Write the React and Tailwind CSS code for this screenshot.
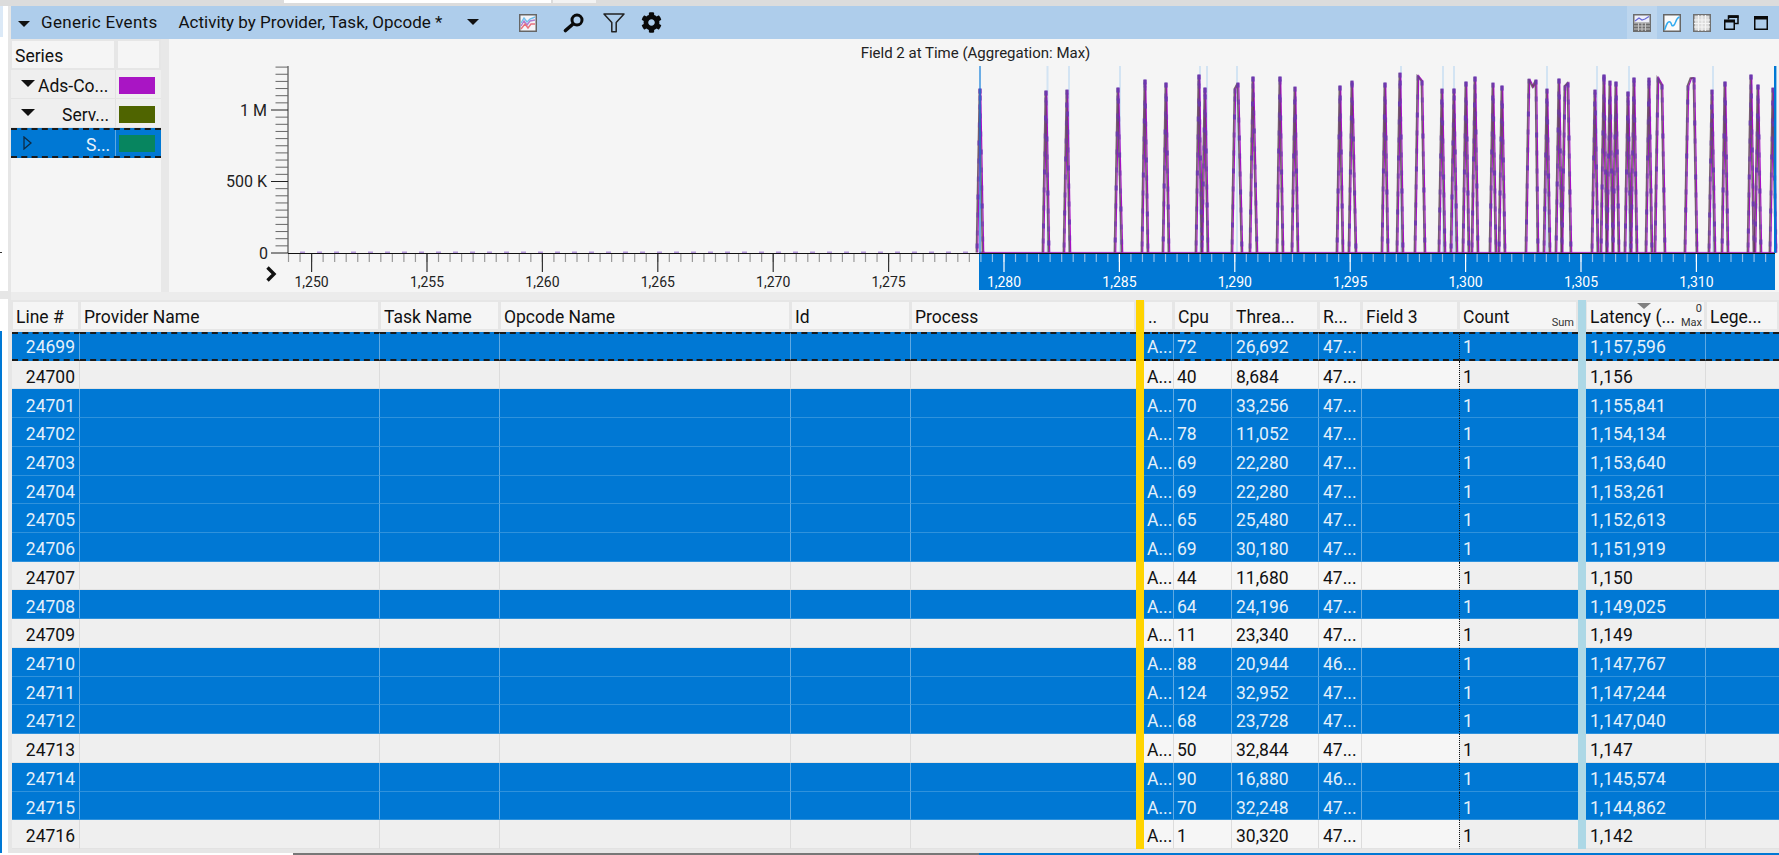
import React from "react";
import { FaCog } from "react-icons/fa";

const font = "font-['Roboto','Liberation_Sans',sans-serif]";
const cols = "grid-cols-[68px_300px_120px_291px_120px_225px_8px_30px_58px_87px_43px_97px_119px_8px_120px_73px]";

const rows = [
  ["24699", true, "72", "26,692", "47...", "1,157,596"],
  ["24700", false, "40", "8,684", "47...", "1,156"],
  ["24701", true, "70", "33,256", "47...", "1,155,841"],
  ["24702", true, "78", "11,052", "47...", "1,154,134"],
  ["24703", true, "69", "22,280", "47...", "1,153,640"],
  ["24704", true, "69", "22,280", "47...", "1,153,261"],
  ["24705", true, "65", "25,480", "47...", "1,152,613"],
  ["24706", true, "69", "30,180", "47...", "1,151,919"],
  ["24707", false, "44", "11,680", "47...", "1,150"],
  ["24708", true, "64", "24,196", "47...", "1,149,025"],
  ["24709", false, "11", "23,340", "47...", "1,149"],
  ["24710", true, "88", "20,944", "46...", "1,147,767"],
  ["24711", true, "124", "32,952", "47...", "1,147,244"],
  ["24712", true, "68", "23,728", "47...", "1,147,040"],
  ["24713", false, "50", "32,844", "47...", "1,147"],
  ["24714", true, "90", "16,880", "46...", "1,145,574"],
  ["24715", true, "70", "32,248", "47...", "1,144,862"],
  ["24716", false, "1", "30,320", "47...", "1,142"],
];

// Peaks: [x, y] vertices between base points, in page coordinates
const peaks = [
  [977, [[980, 89]], 983], [1043, [[1046, 91]], 1049], [1064, [[1067, 90]], 1070],
  [1115, [[1118, 88]], 1122], [1142, [[1145, 80]], 1148], [1163, [[1166, 83]], 1169],
  [1196, [[1199, 75]], 1202], [1202, [[1205, 88]], 1208],
  [1232, [[1235, 89], [1238, 83]], 1242], [1250, [[1253, 77]], 1257], [1277, [[1280, 77]], 1283],
  [1292, [[1295, 87]], 1298], [1337, [[1340, 86]], 1343], [1349, [[1352, 81]], 1356],
  [1382, [[1385, 83]], 1388], [1397, [[1400, 73]], 1403],
  [1415, [[1418, 76], [1422, 81]], 1425], [1439, [[1442, 89]], 1445], [1451, [[1454, 89]], 1457],
  [1463, [[1466, 82]], 1469], [1472, [[1475, 77]], 1478], [1490, [[1493, 83]], 1496],
  [1499, [[1502, 86]], 1505], [1526, [[1529, 79], [1533, 87], [1536, 80]], 1538],
  [1544, [[1547, 89]], 1550], [1556, [[1559, 79]], 1562], [1562, [[1565, 86], [1568, 83]], 1571],
  [1592, [[1595, 90]], 1598], [1601, [[1604, 75]], 1607], [1607, [[1610, 81]], 1613],
  [1613, [[1616, 82]], 1619], [1625, [[1628, 92]], 1631], [1631, [[1634, 78]], 1637],
  [1646, [[1649, 78]], 1652], [1655, [[1658, 78], [1662, 85]], 1665],
  [1685, [[1688, 86], [1691, 78], [1694, 78]], 1697], [1709, [[1712, 90]], 1715],
  [1722, [[1725, 82]], 1728], [1748, [[1751, 75]], 1754], [1755, [[1758, 85]], 1761],
  [1770, [[1773, 88]], 1776],
];
const glows = [1047.5, 1069, 1120, 1200, 1207, 1237, 1401, 1443, 1454, 1547, 1597, 1629, 1713];

const peakPath = (p, dx = 0) =>
  `M${p[0] + dx} 252.5 ` + p[1].map(([x, y]) => `L${x + dx} ${y}`).join(" ") + ` L${p[2] + dx} 252.5`;

const markers = [];
peaks.forEach((p, pi) => {
  const first = p[1][0];
  const last = p[1][p[1].length - 1];
  const sides = [[p[0], first[0], first[1]], [p[2], last[0], last[1]]];
  sides.forEach(([bx, tx, ty], si) => {
    let y = 246 - ((pi * 5 + si * 7) % 9);
    while (y > ty + 3) {
      const t = (252 - y) / (252 - ty);
      markers.push([bx + (tx - bx) * t, y]);
      y -= 13 + ((pi + si * 3 + Math.round(y)) % 6);
    }
    markers.push([tx, ty + 2]);
  });
});

const majors = Array.from({ length: 13 }, (_, i) => ({ x: 311.6 + i * 115.4, label: (1250 + i * 5).toLocaleString("en-US") }));
const minors = Array.from({ length: 129 }, (_, i) => 288.5 + i * 11.54);
const yTicks = Array.from({ length: 27 }, (_, i) => 253 - i * 7.15);

function Chart() {
  return (
    <svg className="block" width="1610" height="253" viewBox="169 39 1610 253">
      <text x="975.5" y="58" textAnchor="middle" fontSize="15" fill="#222" fontFamily="Roboto">Field 2 at Time (Aggregation: Max)</text>
      {glows.map((x) => <rect key={x} x={x - 1} y="66" width="2" height="187" fill="#d3e4f3" />)}
      <rect x="979" y="253" width="796" height="37" fill="#0078d4" />
      <line x1="288" y1="66" x2="288" y2="253" stroke="#333" />
      {yTicks.map((y, i) => (
        <line key={i} x1={i % 10 === 0 ? 271 : 275.5} x2="288" y1={y} y2={y} stroke={i % 10 === 0 ? "#222" : "#666"} />
      ))}
      <text x="267" y="116" textAnchor="end" fontSize="16" fill="#222" fontFamily="Roboto">1 M</text>
      <text x="267" y="187" textAnchor="end" fontSize="16" fill="#222" fontFamily="Roboto">500 K</text>
      <text x="268" y="259" textAnchor="end" fontSize="16" fill="#222" fontFamily="Roboto">0</text>
      <line x1="288" y1="253.5" x2="1775" y2="253.5" stroke="#111" />
      {minors.map((x) => (
        <line key={x} x1={x} x2={x} y1="254" y2="262" stroke={x > 979 ? "#8cc2ec" : "#999"} strokeWidth="1.2" />
      ))}
      {majors.map((m) => (
        <g key={m.x}>
          <line x1={m.x} x2={m.x} y1="254" y2="272" stroke={m.x > 979 ? "#fff" : "#333"} strokeWidth="1.2" />
          <text x={m.x} y="287" textAnchor="middle" fontSize="14" fill={m.x > 979 ? "#fff" : "#222"} fontFamily="Roboto">{m.label}</text>
        </g>
      ))}
      {Array.from({ length: 41 }, (_, i) => (
        <rect key={i} x={300 + i * 17} y="251.5" width="5" height="1.5" fill="#8a5cc8" opacity="0.6" />
      ))}
      <line x1="979" y1="252.4" x2="1775" y2="252.4" stroke="#a428bc" strokeWidth="1" />
      {peaks.map((p, i) => <path key={i} d={peakPath(p, 0.7)} fill="none" stroke="#a80fc8" strokeWidth="1.2" />)}
      {peaks.map((p, i) => <path key={i} d={peakPath(p, -0.6)} fill="none" stroke="#5e3f58" strokeOpacity="0.85" strokeWidth="1.6" />)}
      {markers.map(([x, y], i) => (
        <rect key={i} x={x - 1.5} y={y - 2.5} width="3" height="5" fill="#6a38b0" opacity={i % 3 === 0 ? 0.85 : 0.5} />
      ))}
      <line x1="980" y1="66" x2="980" y2="253" stroke="#0f7ddb" strokeWidth="1.2" />
      <rect x="1774" y="66" width="2.4" height="187" fill="#0078d4" />
      <polyline points="267.5,267.5 274,274 267.5,280.5" fill="none" stroke="#111" strokeWidth="3.4" />
    </svg>
  );
}

function ChartIcon() {
  return (
    <svg width="18" height="18" viewBox="0 0 18 18">
      <rect x="0.75" y="0.75" width="16.5" height="16.5" fill="#f4f4f8" stroke="#666" strokeWidth="1.5" />
      <path d="M2 9 L5 4 L8 8 L11 5 L16 3" fill="none" stroke="#6fc0ee" strokeWidth="1.4" />
      <path d="M2 12 L5 7 L8 11 L11 7 L16 6" fill="none" stroke="#b07cd0" strokeWidth="1.4" />
      <path d="M2 15 L6 10 L9 14 L12 10 L16 10" fill="none" stroke="#e8707c" strokeWidth="1.4" />
    </svg>
  );
}
function SearchIcon() {
  return (
    <svg width="22" height="20" viewBox="0 0 22 20">
      <circle cx="14" cy="7" r="5" fill="none" stroke="#0a0a0a" strokeWidth="3" />
      <line x1="10" y1="11" x2="2.5" y2="17.5" stroke="#0a0a0a" strokeWidth="3.6" strokeLinecap="round" />
    </svg>
  );
}
function FunnelIcon() {
  return (
    <svg width="22" height="20" viewBox="0 0 22 20">
      <path d="M1 1 H21 L13.2 9.5 V18.8 H8.8 V9.5 Z" fill="none" stroke="#222" strokeWidth="1.5" strokeLinejoin="round" />
    </svg>
  );
}
function ComboIcon() {
  return (
    <svg width="18" height="18" viewBox="0 0 18 18">
      <rect width="18" height="18" fill="#6d6d6d" />
      <rect x="1.5" y="1.5" width="15" height="7" fill="#eef0fa" />
      <path d="M2 7 L6 4 L9 6 L12 5 L16 2.5" fill="none" stroke="#6a6ad8" strokeWidth="1.3" />
      <path d="M1 9 H17 M1 12 H17 M1 15 H17 M5.5 9 V17 M9 9 V17 M12.5 9 V17" stroke="#c5c5c5" strokeWidth="1.1" />
    </svg>
  );
}
function LineIcon() {
  return (
    <svg width="18" height="18" viewBox="0 0 18 18">
      <rect x="0.75" y="0.75" width="16.5" height="16.5" fill="#fafafa" stroke="#666" strokeWidth="1.5" />
      <path d="M1.5 16 C4 9 5 7 7 8 C9 9 8 13 10.5 11.5 C13 10 12.5 4 16.5 3" fill="none" stroke="#32aaf0" strokeWidth="1.5" />
    </svg>
  );
}
function GridIcon() {
  return (
    <svg width="18" height="18" viewBox="0 0 18 18">
      <rect x="0.75" y="0.75" width="16.5" height="16.5" fill="#dcdcdc" stroke="#707070" strokeWidth="1.5" />
      <path d="M1 6 H17 M1 9.5 H17 M1 13 H17 M5.5 1 V17 M9 1 V17 M12.5 1 V17" stroke="#f4f4f4" strokeWidth="1.2" />
    </svg>
  );
}
function RestoreIcon() {
  return (
    <svg width="15" height="15" viewBox="0 0 15 15">
      <path d="M4.5 4.5 V1 H14 V8.5 H10.5" fill="none" stroke="#0a0a0a" strokeWidth="1.5" />
      <rect x="4.5" y="0.5" width="10" height="2.5" fill="#0a0a0a" />
      <rect x="0.75" y="5.25" width="9.5" height="9" fill="none" stroke="#0a0a0a" strokeWidth="1.5" />
      <rect x="0.5" y="5" width="10" height="2.5" fill="#0a0a0a" />
    </svg>
  );
}
function MaxIcon() {
  return (
    <svg width="14" height="14" viewBox="0 0 14 14">
      <rect x="0.75" y="0.75" width="12.5" height="12.5" fill="none" stroke="#0a0a0a" strokeWidth="1.5" />
      <rect x="0" y="0" width="14" height="3.5" fill="#0a0a0a" />
    </svg>
  );
}
function Caret({ className = "" }) {
  return <span className={`block w-0 h-0 border-l-[6px] border-r-[6px] border-t-[6px] border-l-transparent border-r-transparent border-t-[#111] ${className}`} />;
}

function TitleBar() {
  return (
    <div className="flex items-center h-[33px] bg-[#aecdeb] text-[#111] text-[17px] leading-none whitespace-nowrap">
      <Caret className="ml-[7px] mt-[2px]" />
      <span className="ml-[11px] w-[137.5px] shrink-0 tracking-[0.3px]">Generic Events</span>
      <span className="w-[288.5px] shrink-0">Activity by Provider, Task, Opcode *</span>
      <Caret className="-mt-[2px]" />
      <span className="ml-[40px] flex"><ChartIcon /></span>
      <span className="ml-[26px] flex"><SearchIcon /></span>
      <span className="ml-[18px] flex"><FunnelIcon /></span>
      <span className="ml-[16px] flex"><FaCog size={21} color="#0a0a0a" /></span>
      <span className="flex-1" />
      <span className="flex items-center justify-center w-[30px] h-full bg-[#bdd6ee]"><ComboIcon /></span>
      <span className="ml-[6px] flex"><LineIcon /></span>
      <span className="ml-[12px] flex"><GridIcon /></span>
      <span className="ml-[13px] flex"><RestoreIcon /></span>
      <span className="ml-[15px] mr-[11px] flex"><MaxIcon /></span>
    </div>
  );
}

function LegendRow({ text, swatch, indent, selected, top }) {
  return (
    <div className={`relative grid grid-cols-[105px_45px] text-[17.5px] leading-none ${selected ? "h-[30px] bg-[#0078d4] text-[#e8f2fa] border-y-2 border-dashed border-y-[#1a1a1a]" : "h-[29px] bg-[#efefef] text-[#111] border-b border-[#e4e4e4]"}`}>
      <div className={`relative flex items-center pt-[5px] border-r ${selected ? "border-[#5ea9e3]" : "border-[#e2e2e2]"}`}>
        {selected ? (
          <svg className="absolute left-[12px] top-[6px]" width="9" height="14" viewBox="0 0 9 14">
            <path d="M1 1 L8 7 L1 13 Z" fill="none" stroke="#0d2b45" strokeWidth="1.3" />
          </svg>
        ) : (
          <span className="absolute left-[10px] w-0 h-0 border-l-[7px] border-r-[7px] border-t-[7px] border-l-transparent border-r-transparent border-t-[#111]" style={{ top }} />
        )}
        <span style={{ marginLeft: indent }}>{text}</span>
      </div>
      <div className={`flex items-center pl-[3px] ${selected ? "" : "pt-[2px]"}`}>
        <span className="block w-[36px] h-[17px]" style={{ backgroundColor: swatch }} />
      </div>
    </div>
  );
}

function Legend() {
  return (
    <div className="w-[150px] shrink-0 bg-[#f5f5f5] h-full">
      <div className="flex h-[31px] bg-[#e6e6e6] pt-[2px] pb-[2px] pl-px text-[17.5px] text-[#111] leading-none">
        <div className="w-[102px] h-[27px] bg-[#f5f5f5] flex items-center pl-[3px] pt-[5px]">Series</div>
        <div className="ml-[4px] w-[41px] h-[27px] bg-[#f5f5f5]" />
      </div>
      <LegendRow text="Ads-Co..." swatch="#a915c4" indent={27} top={10} />
      <LegendRow text="Serv..." swatch="#4f6400" indent={51} top={10} />
      <LegendRow text="S..." swatch="#07855f" indent={75} selected />
    </div>
  );
}

function HeaderCell({ children, className = "" }) {
  return (
    <div className={`relative ml-px mr-[2px] h-[27px] bg-[#f5f5f5] flex items-center pl-[3px] pt-[5px] overflow-hidden whitespace-nowrap ${className}`}>
      {children}
    </div>
  );
}

function Table() {
  return (
    <div className={`flex flex-col pl-px text-[17.5px] leading-none`}>
      <div className={`grid ${cols} h-[32px] pt-[2px] text-[#111]`}>
        <HeaderCell>Line #</HeaderCell>
        <HeaderCell>Provider Name</HeaderCell>
        <HeaderCell>Task Name</HeaderCell>
        <HeaderCell>Opcode Name</HeaderCell>
        <HeaderCell>Id</HeaderCell>
        <HeaderCell>Process</HeaderCell>
        <div className="bg-[#ffd400] -mt-[2px] h-[32px]" />
        <HeaderCell>..</HeaderCell>
        <HeaderCell>Cpu</HeaderCell>
        <HeaderCell>Threa...</HeaderCell>
        <HeaderCell>R...</HeaderCell>
        <HeaderCell>Field 3</HeaderCell>
        <HeaderCell>
          Count
          <span className="absolute right-[2px] bottom-[1px] text-[11px] text-[#333]">Sum</span>
        </HeaderCell>
        <div className="bg-[#add8e6] -mt-[2px] h-[32px]" />
        <HeaderCell>
          Latency (...
          <span className="absolute left-[50px] top-[1px] w-0 h-0 border-l-[7px] border-r-[7px] border-t-[6px] border-l-transparent border-r-transparent border-t-[#808080]" />
          <span className="absolute right-[2px] top-[1px] text-[11px] text-[#333]">0</span>
          <span className="absolute right-[2px] bottom-[1px] text-[11px] text-[#333]">Max</span>
        </HeaderCell>
        <HeaderCell className="mr-0">Lege...</HeaderCell>
      </div>
      {rows.map((r, i) => <Row key={r[0]} r={r} focused={i === 0} />)}
    </div>
  );
}

function Row({ r, focused }) {
  const [line, sel, cpu, thread, rr, latency] = r;
  const sep = sel ? "border-r border-r-[#5ea9e3]" : "border-r border-r-[#dcdcdc]";
  const base = sel ? "bg-[#0078d4] text-[#e4f0fa]" : "bg-[#efefef] text-[#111]";
  const light = sel ? "bg-[#0078d4] text-[#e4f0fa]" : "bg-[#f6f6f6] text-[#111]";
  const rowBorder = focused
    ? "pt-[3px] border-y-2 border-y-[#1a1a1a] [border-top-style:dashed] [border-bottom-style:dashed]"
    : sel
      ? "pt-[6px] border-b border-b-[#2f92dc]"
      : "pt-[6px] border-b border-b-[#e2e2e2]";
  const cell = `flex items-center overflow-hidden whitespace-nowrap ${rowBorder}`;
  return (
    <div className={`grid ${cols} h-[28.72px]`}>
      <div className={`${cell} ${base} ${sep} justify-end pr-[4px]`}>{line}</div>
      <div className={`${cell} ${base} ${sep}`} />
      <div className={`${cell} ${base} ${sep}`} />
      <div className={`${cell} ${base} ${sep}`} />
      <div className={`${cell} ${base} ${sep}`} />
      <div className={`${cell} ${base}`} />
      <div className="bg-[#ffd400]" />
      <div className={`${cell} ${light} ${sep} pl-[3px]`}>A...</div>
      <div className={`${cell} ${light} ${sep} pl-[3px]`}>{cpu}</div>
      <div className={`${cell} ${light} ${sep} pl-[4px]`}>{thread}</div>
      <div className={`${cell} ${light} ${sep} pl-[4px]`}>{rr}</div>
      <div className={`${cell} ${light}`} />
      <div className={`${cell} ${base} border-l border-l-[#111] [border-left-style:dotted] pl-[3px]`}>1</div>
      <div className="bg-[#add8e6]" />
      <div className={`${cell} ${base} ${sep} pl-[4px]`}>{latency}</div>
      <div className={`${cell} ${base}`} />
    </div>
  );
}

export default function App() {
  return (
    <div className={`${font} w-[1779px] h-[855px] overflow-hidden bg-[#e6e6e6] flex flex-col`}>
      <div className="flex h-[6px] shrink-0 bg-[#dcdcdc]">
        <div className="w-[284px]" />
        <div className="w-[267px] h-[3px] bg-white" />
        <div className="w-[2px]" />
        <div className="w-[43px] h-[3px] bg-[#f2f2f2]" />
      </div>
      <div className="flex flex-1 min-h-0">
        <div className="w-[8px] shrink-0 bg-white flex flex-col">
          <div className="w-[3px] h-[31px] bg-[#dbe9f7]" />
          <div className="h-[215px]" />
          <div className="w-[2px] h-px bg-[#333]" />
          <div className="h-[38px]" />
          <div className="h-[8px] bg-[#e6e6e6]" />
          <div className="h-[32px]" />
          <div className="w-[2px] flex-1 bg-[#0078d4]" />
        </div>
        <div className="w-[3px] shrink-0 bg-[#e6e6e6]" />
        <div className="flex-1 min-w-0 flex flex-col">
          <TitleBar />
          <div className="flex h-[253px]">
            <Legend />
            <div className="w-[8px] shrink-0 bg-[#e8e8e8]" />
            <div className="flex-1 bg-[#f5f5f5] min-w-0"><Chart /></div>
          </div>
          <div className="h-[8px] bg-[#ececec]" />
          <Table />
        </div>
      </div>
      <div className="flex h-[2px] shrink-0 bg-white">
        <div className="w-[293px]" />
        <div className="w-[686px] bg-[#777]" />
        <div className="flex-1 bg-[#0078d4]" />
      </div>
    </div>
  );
}
